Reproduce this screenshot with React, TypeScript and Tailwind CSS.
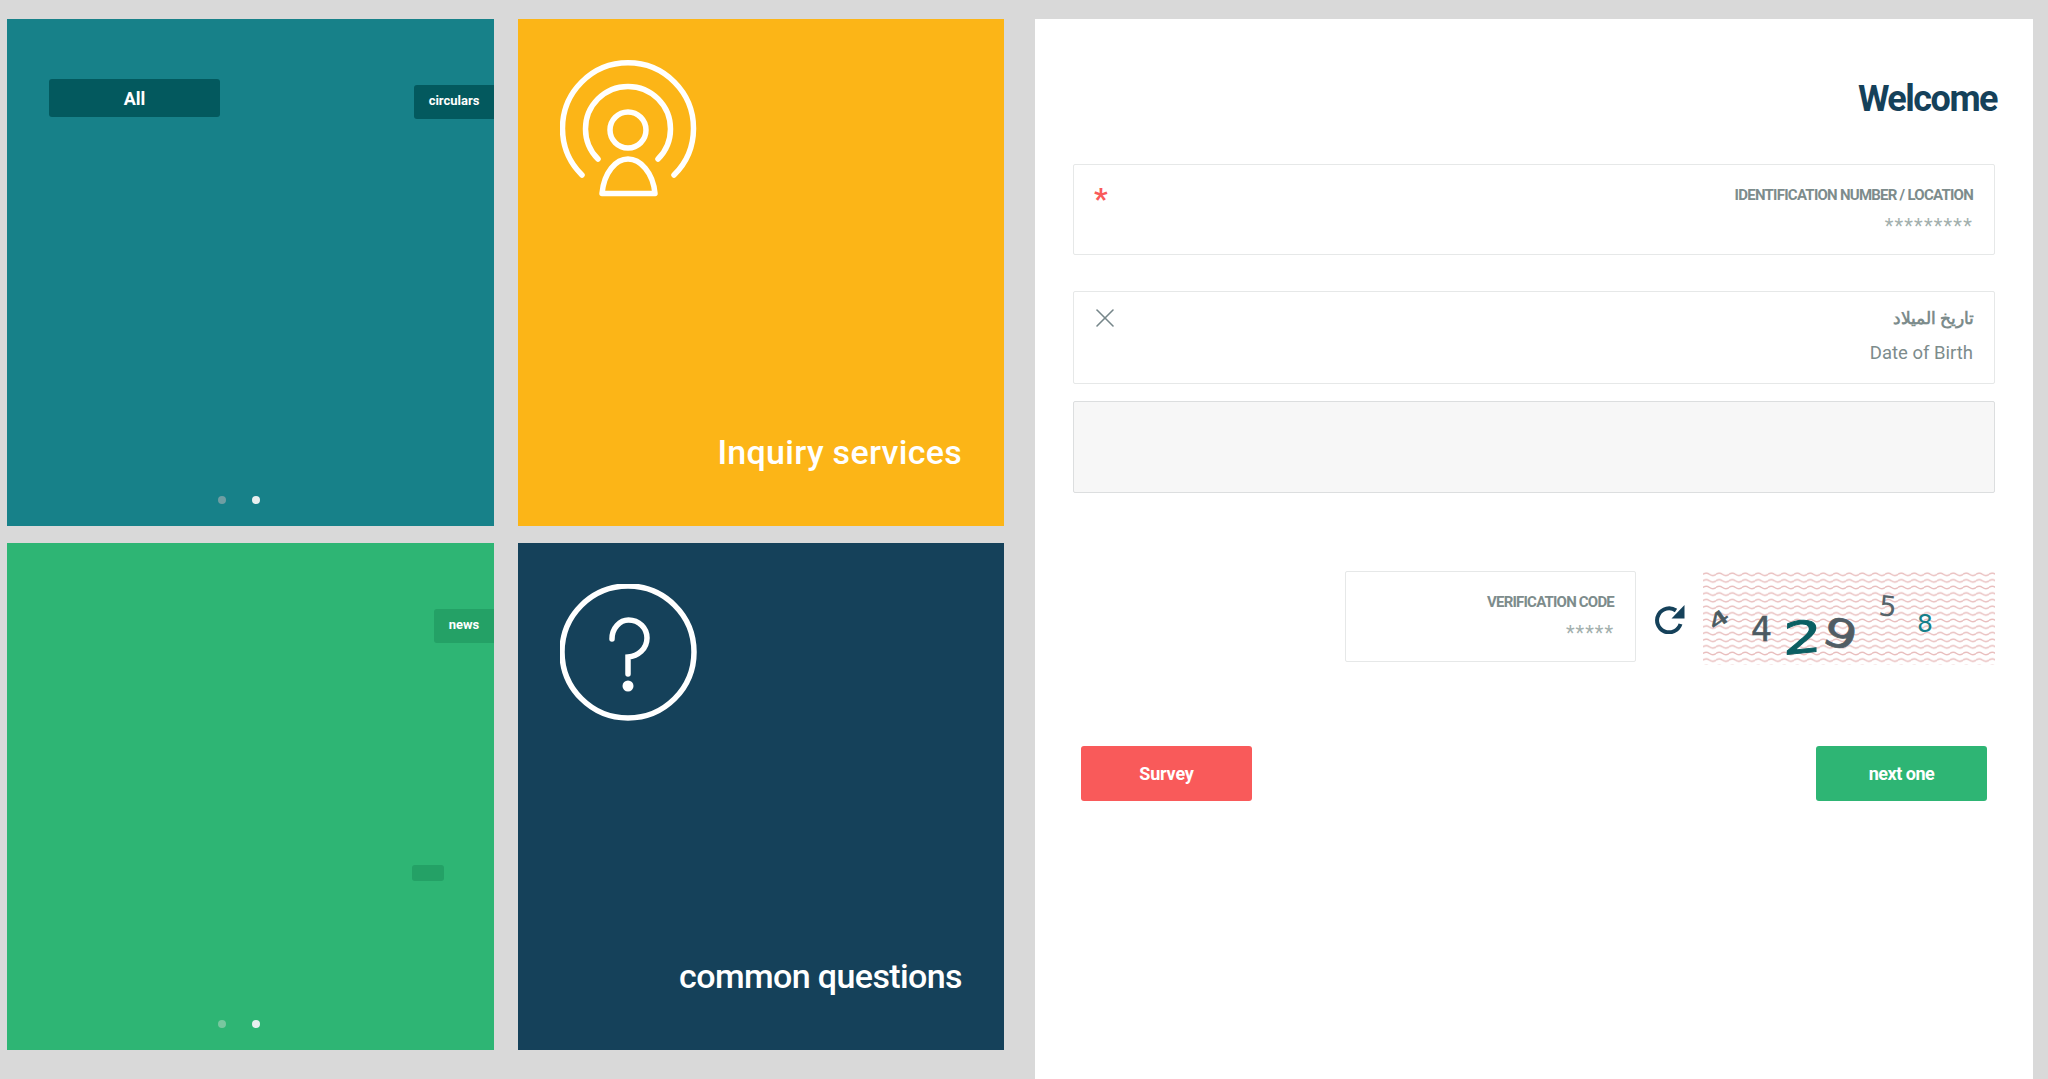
import { ReactNode } from "react";
import { X } from "lucide-react";

const PodcastIcon = () => (
  <svg width="140" height="140" viewBox="0 0 140 140" fill="none" stroke="white" strokeWidth="5.500" strokeLinecap="round" strokeLinejoin="round">
    <path d="M22 115 A65.5 65.5 0 1 1 114 115" />
    <path d="M38 99 A42.5 42.5 0 1 1 98 99" />
    <circle cx="68" cy="70" r="18" />
    <path d="M42 133.500 C44 112 56 99 68 99 C80 99 93 112 95 133.500 Z" />
  </svg>
);

const QuestionIcon = () => (
  <svg width="140" height="140" viewBox="0 0 140 140" fill="none" stroke="white" strokeWidth="5.500" strokeLinecap="round">
    <circle cx="68" cy="68" r="66" />
    <path d="M52 55 C52 44 60 36 68.500 36 C79 36 87 44 87 54 C87 65 78 72 68 73 L68 90" />
    <circle cx="68" cy="102" r="5.500" fill="white" stroke="none" />
  </svg>
);

const RefreshIcon = () => (
  <svg width="30" height="30" viewBox="0 0 30 30" fill="none">
    <path d="M21 6.500 A12 12 0 1 0 25.500 20" stroke="#15415a" strokeWidth="4" />
    <path d="M29.500 1 L29.500 14.500 L16.500 14.500 Z" fill="#15415a" />
  </svg>
);

const Dots = ({ first }: { first: string }) => (
  <div className="absolute bottom-[22px] left-[211px] flex gap-[26px]">
    <span className={`size-2 rounded-full ${first}`} />
    <span className="size-2 rounded-full bg-[#e8efef]" />
  </div>
);

const Tab = ({ className, children }: { className: string; children: ReactNode }) => (
  <div className={`absolute flex items-center justify-center font-bold text-white ${className}`}>{children}</div>
);

const LinkTile = ({ bg, icon, label, tracking }: { bg: string; icon: ReactNode; label: string; tracking: string }) => (
  <div className={`flex h-[507px] flex-col justify-between pt-[41px] pr-[42px] pb-[52px] pl-[42px] ${bg}`}>
    {icon}
    <div className={`text-right text-[34px] leading-[44px] font-medium text-white ${tracking}`}>{label}</div>
  </div>
);

const Field = ({ className, children }: { className: string; children: ReactNode }) => (
  <div className={`relative rounded-[2px] border border-[#e6e8e8] bg-white pr-[21px] text-right ${className}`}>{children}</div>
);

// wavy background + distorted digits of the captcha image
const Captcha = () => (
  <svg width="292" height="94" viewBox="0 0 292 94" className="shrink-0">
    <defs>
      <pattern id="wave" width="13" height="6.600" patternUnits="userSpaceOnUse">
        <path d="M0 3.300 Q3.250 1 6.500 3.300 T13 3.300" fill="none" stroke="#e8bcbc" strokeWidth="1.400" />
      </pattern>
    </defs>
    <rect width="292" height="94" fill="url(#wave)" />
    <g fontFamily="'DejaVu Sans', sans-serif">
      <text transform="translate(11 60) rotate(-35) scale(1.1 0.65)" fontSize="30" stroke="#4a5a60" strokeWidth="0.800" fill="#4a5a60">4</text>
      <text x="48" y="70" fontSize="33" stroke="#4d5b62" strokeWidth="0.600" fill="#4d5b62">4</text>
      <text transform="translate(80 84) rotate(-6) skewX(-6) scale(1.4 1)" fontSize="44" stroke="#0b5f63" strokeWidth="1" fill="#0b5f63">2</text>
      <text transform="translate(117 71) rotate(18) scale(1.2 0.9)" fontSize="44" stroke="#515d64" strokeWidth="0.800" fill="#515d64">9</text>
      <text transform="translate(175 44) rotate(6)" fontSize="28" fill="#56646a">5</text>
      <text x="214" y="61" fontSize="25" fill="#17808a">8</text>
    </g>
  </svg>
);

export default function App() {
  return (
    <div className="flex h-[1079px] overflow-hidden bg-[#d9d9d9] pt-[19px] pl-[7px] font-['Roboto',sans-serif]">
      <div className="grid h-fit grid-cols-[487px_486px] gap-x-[24px] gap-y-[17px]">
        <div className="relative h-[507px] bg-[#178189]">
          <Tab className="top-[60px] left-[42px] h-[38px] w-[171px] rounded-[3px] bg-[#03595e] text-[18px]">All</Tab>
          <Tab className="top-[66px] right-0 h-[34px] w-[80px] rounded-l-[3px] bg-[#03595e] pb-[2px] text-[13px]">circulars</Tab>
          <Dots first="bg-[#6f9ea3]" />
        </div>
        <LinkTile bg="bg-[#fcb517]" icon={<PodcastIcon />} label="Inquiry services" tracking="tracking-[0.3px]" />
        <div className="relative h-[507px] bg-[#2eb574]">
          <Tab className="top-[66px] right-0 h-[34px] w-[60px] rounded-l-[3px] bg-[#24a166] pb-[3px] text-[13px]">news</Tab>
          <div className="absolute top-[322px] left-[405px] h-4 w-[32px] rounded-[3px] bg-[#24a166]" />
          <Dots first="bg-[#78c79f]" />
        </div>
        <LinkTile bg="bg-[#15415a]" icon={<QuestionIcon />} label="common questions" tracking="tracking-[-0.6px]" />
      </div>

      <div className="ml-[31px] flex w-[998px] flex-col bg-white pt-[57px] pr-[38px] pl-[38px]">
        <h1 className="-mr-[2px] text-right text-[36px] leading-[46px] font-bold tracking-[-1.5px] text-[#15415a]">Welcome</h1>

        <Field className="mt-[42px] h-[91px] pt-[20px]">
          <span className="absolute top-[16px] left-[20px] text-[30px] leading-[36px] font-bold text-[#f95a5a]">*</span>
          <div className="text-[15px] leading-[20px] font-bold tracking-[-0.75px] text-[#7d8c8c]">IDENTIFICATION NUMBER / LOCATION</div>
          <div className="mt-[11px] text-[20px] leading-[20px] tracking-[1.2px] text-[#a3b0ae]">*********</div>
        </Field>

        <Field className="mt-[36px] h-[93px] pt-[13px]">
          <X className="absolute top-[10px] left-[15px] size-[32px] text-[#76868a]" strokeWidth={1.200} />
          <div dir="rtl" className="-mr-[1px] text-[17px] leading-[26px] font-bold text-[#7d8c8c]">تاريخ الميلاد</div>
          <div className="mt-[10px] text-[18.500px] leading-[24px] text-[#7d8c8c]">Date of Birth</div>
        </Field>

        <div className="mt-[17px] h-[92px] rounded-[2px] border border-[#dcdedf] bg-[#f7f7f7]" />

        <div className="mt-[78px] flex h-[94px] items-start justify-end">
          <Field className="h-[91px] w-[291px] pt-[20px]">
            <div className="text-[15px] leading-[20px] font-bold tracking-[-0.8px] text-[#7d8c8c]">VERIFICATION CODE</div>
            <div className="mt-[11px] text-[20px] leading-[20px] tracking-[1px] text-[#a3b0ae]">*****</div>
          </Field>
          <div className="flex h-[93px] w-[67px] items-center justify-center pt-[2px]">
            <RefreshIcon />
          </div>
          <Captcha />
        </div>

        <div className="mt-[81px] flex justify-between px-[8px]">
          <button className="h-[55px] w-[171px] rounded-[3px] bg-[#f95a5a] text-[18px] font-bold tracking-[-0.2px] text-white">Survey</button>
          <button className="h-[55px] w-[171px] rounded-[3px] bg-[#2eb574] text-[18px] font-bold tracking-[-0.5px] text-white">next one</button>
        </div>
      </div>
    </div>
  );
}
